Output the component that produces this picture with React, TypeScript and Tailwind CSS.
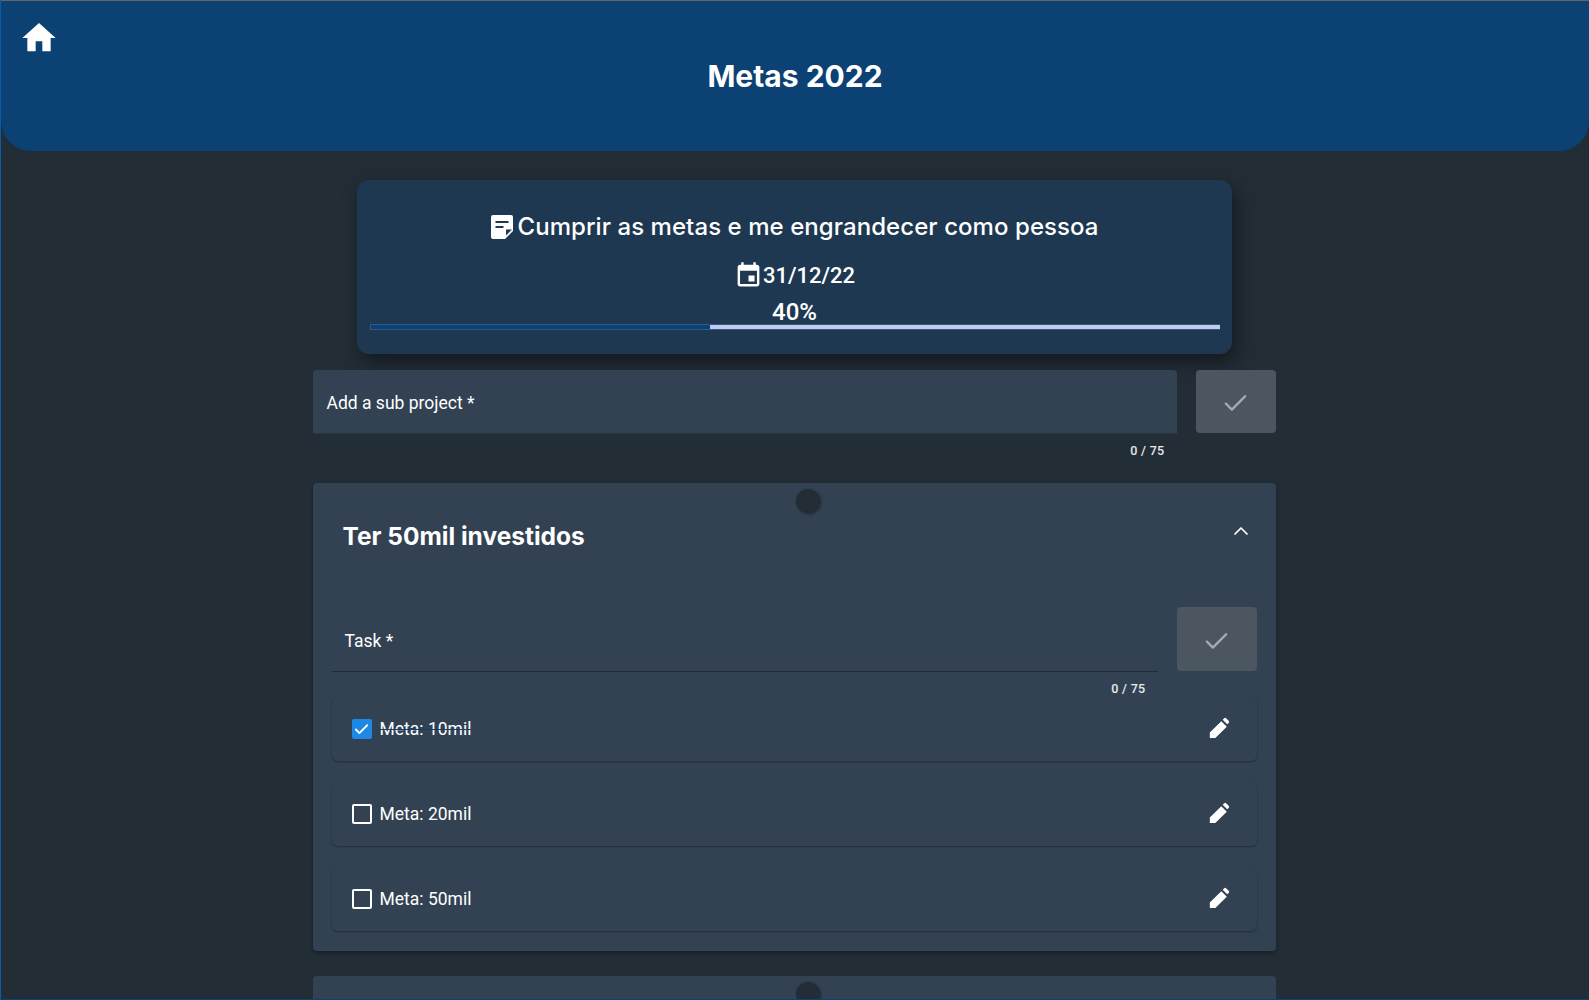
import { Check, ChevronUp } from "lucide-react";

const poppins = "font-['Inter',sans-serif]";

function HomeIcon() {
  return (
    <svg viewBox="0 0 24 24" className="w-[40px] h-[40px] fill-white">
      <path d="M10 20v-6h4v6h5v-8h3L12 3 2 12h3v8z" />
    </svg>
  );
}

function NoteIcon() {
  return (
    <svg viewBox="0 0 24 24" className="w-[24px] h-[24px] fill-white">
      <path
        fillRule="evenodd"
        d="M3 0h18a2 2 0 0 1 2 2v14l-8 8H3a2 2 0 0 1-2-2V2a2 2 0 0 1 2-2zM5.500 6v2h13V6h-13zm0 5v2h8v-2h-8zm10.500 3.500v6l6-6h-6z"
      />
    </svg>
  );
}

function CalendarIcon() {
  return (
    <svg viewBox="0 0 24 24" className="w-[29px] h-[29px] fill-white">
      <path d="M17 12h-5v5h5v-5zM16 1v2H8V1H6v2H5c-1.11 0-1.99.9-1.99 2L3 19c0 1.1.89 2 2 2h14c1.1 0 2-.9 2-2V5c0-1.1-.9-2-2-2h-1V1h-2zm3 18H5V8h14v11z" />
    </svg>
  );
}

function PencilIcon() {
  return (
    <svg viewBox="0 0 24 24" className="w-[22px] h-[22px] fill-white">
      <path d="M2 23v-6L14.500 4.500l6 6L8 23H2zM16 3l1.500-1.500a1.800 1.800 0 0 1 2.500 0l2.500 2.500a1.800 1.800 0 0 1 0 2.500L21 8z" />
    </svg>
  );
}

function Counter() {
  return (
    <div className="h-[32px] pr-[12px] pt-[2px] flex items-center justify-end text-[12.5px] font-medium text-white/90 tracking-[0.3px]">
      0 / 75
    </div>
  );
}

function SubmitButton({ short }: { short?: boolean }) {
  return (
    <button
      type="button"
      className={`w-[80px] shrink-0 rounded bg-[#4b5661] flex items-center justify-center ${short ? "h-[63px] pt-[3px]" : "h-[64px] pt-[5px]"}`}
    >
      <Check className="w-[29px] h-[29px] text-white/50" strokeWidth={2} />
    </button>
  );
}

function TaskRow({ label, done }: { label: string; done?: boolean }) {
  return (
    <div className="h-[64px] rounded-md bg-[#324253] shadow-[0_1px_2px_rgba(0,0,0,0.35)] pl-[20px] pr-[24px] flex items-center">
      {done ? (
        <span className="w-[20px] h-[20px] rounded-[2px] bg-[#1e88e5] flex items-center justify-center">
          <Check className="w-[17px] h-[17px] text-white" strokeWidth={2.5} />
        </span>
      ) : (
        <span className="w-[20px] h-[20px] rounded-[2px] border-2 border-white" />
      )}
      <span className={`ml-[8px] text-[17.5px] text-white ${done ? "line-through decoration-[#0d4173]" : ""}`}>
        {label}
      </span>
      <div className="ml-auto mr-[3px] -mt-[3px]">
        <PencilIcon />
      </div>
    </div>
  );
}

export default function App() {
  return (
    <div className="h-[1000px] overflow-hidden bg-[#222d36] border-l border-l-[#0a5cab] border-b border-b-[#0d4173] font-['Roboto',sans-serif] text-white">
      <header className="relative h-[151px] bg-[#0c4173] rounded-b-[30px] border-t border-t-[#666]">
        <div className="absolute left-[18px] top-[17px]">
          <HomeIcon />
        </div>
        <h1 className={`pt-[57px] text-center text-[30px] leading-[36px] font-bold ${poppins}`}>Metas 2022</h1>
      </header>

      <main className="mx-auto w-[963px] -translate-x-[1px]">
        <section className="mt-[29px] mx-[44px] h-[174px] rounded-xl bg-[#1e3851] shadow-[4px_8px_20px_rgba(0,0,0,0.45)] pl-[13px] pr-[12px] pt-[30px]">
          <div className={`flex items-center justify-center h-[34px] text-[24px] tracking-[0.06px] font-medium ${poppins}`}>
            <NoteIcon />
            <span className="ml-[3px]">Cumprir as metas e me engrandecer como pessoa</span>
          </div>
          <div className="mt-[15px] flex items-center justify-center h-[32px] text-[22px] font-medium">
            <CalendarIcon />
            <span>31/12/22</span>
          </div>
          <div className="mt-[9px] h-[24px] text-center text-[24px] leading-[24px] font-medium">40%</div>
          <div className="h-[6px] flex border-y border-y-[#2d5a86]">
            <div className="w-[40%] bg-[#0c4173] border-l border-l-[#2d5a86]" />
            <div className="flex-1 bg-[#c5cae9]" />
          </div>
        </section>

        <div className="mt-[16px] flex gap-[19px]">
          <div className="flex-1">
            <div className="h-[64px] bg-[#324253] rounded-t flex items-center pl-[14px] pt-[3px] text-[17.5px] border-b border-b-[#27333f]">
              Add a sub project *
            </div>
            <Counter />
          </div>
          <SubmitButton short />
        </div>

        <section className="relative mt-[17px] h-[468px] rounded bg-[#324253] shadow-[0_2px_4px_rgba(0,0,0,0.3)] px-[19px]">
          <div className="absolute left-[483px] top-[6px] w-[24px] h-[24px] rounded-full bg-[#222d36] shadow-[1px_1px_3px_rgba(0,0,0,0.4)]" />
          <div className="flex items-center justify-between h-[124px] pb-[18px] pl-[11px] pr-[4px]">
            <h2 className={`text-[24.5px] font-bold ${poppins}`}>Ter 50mil investidos</h2>
            <ChevronUp className="w-[24px] h-[24px] -mt-[10px]" strokeWidth={1.75} />
          </div>
          <div className="flex gap-[19px]">
            <div className="flex-1">
              <div className="h-[65px] flex items-center pl-[13px] pt-[5px] text-[17.5px] border-b border-b-[#1f2b36]">Task *</div>
              <Counter />
            </div>
            <SubmitButton />
          </div>
          <div className="-mt-[7px] flex flex-col gap-[21px]">
            <TaskRow label="Meta: 10mil" done />
            <TaskRow label="Meta: 20mil" />
            <TaskRow label="Meta: 50mil" />
          </div>
        </section>

        <section className="relative mt-[25px] h-[60px] rounded bg-[#324253] px-[19px]">
          <div className="absolute left-[483px] top-[6px] w-[24px] h-[24px] rounded-full bg-[#222d36] shadow-[1px_1px_3px_rgba(0,0,0,0.4)]" />
        </section>
      </main>
    </div>
  );
}
